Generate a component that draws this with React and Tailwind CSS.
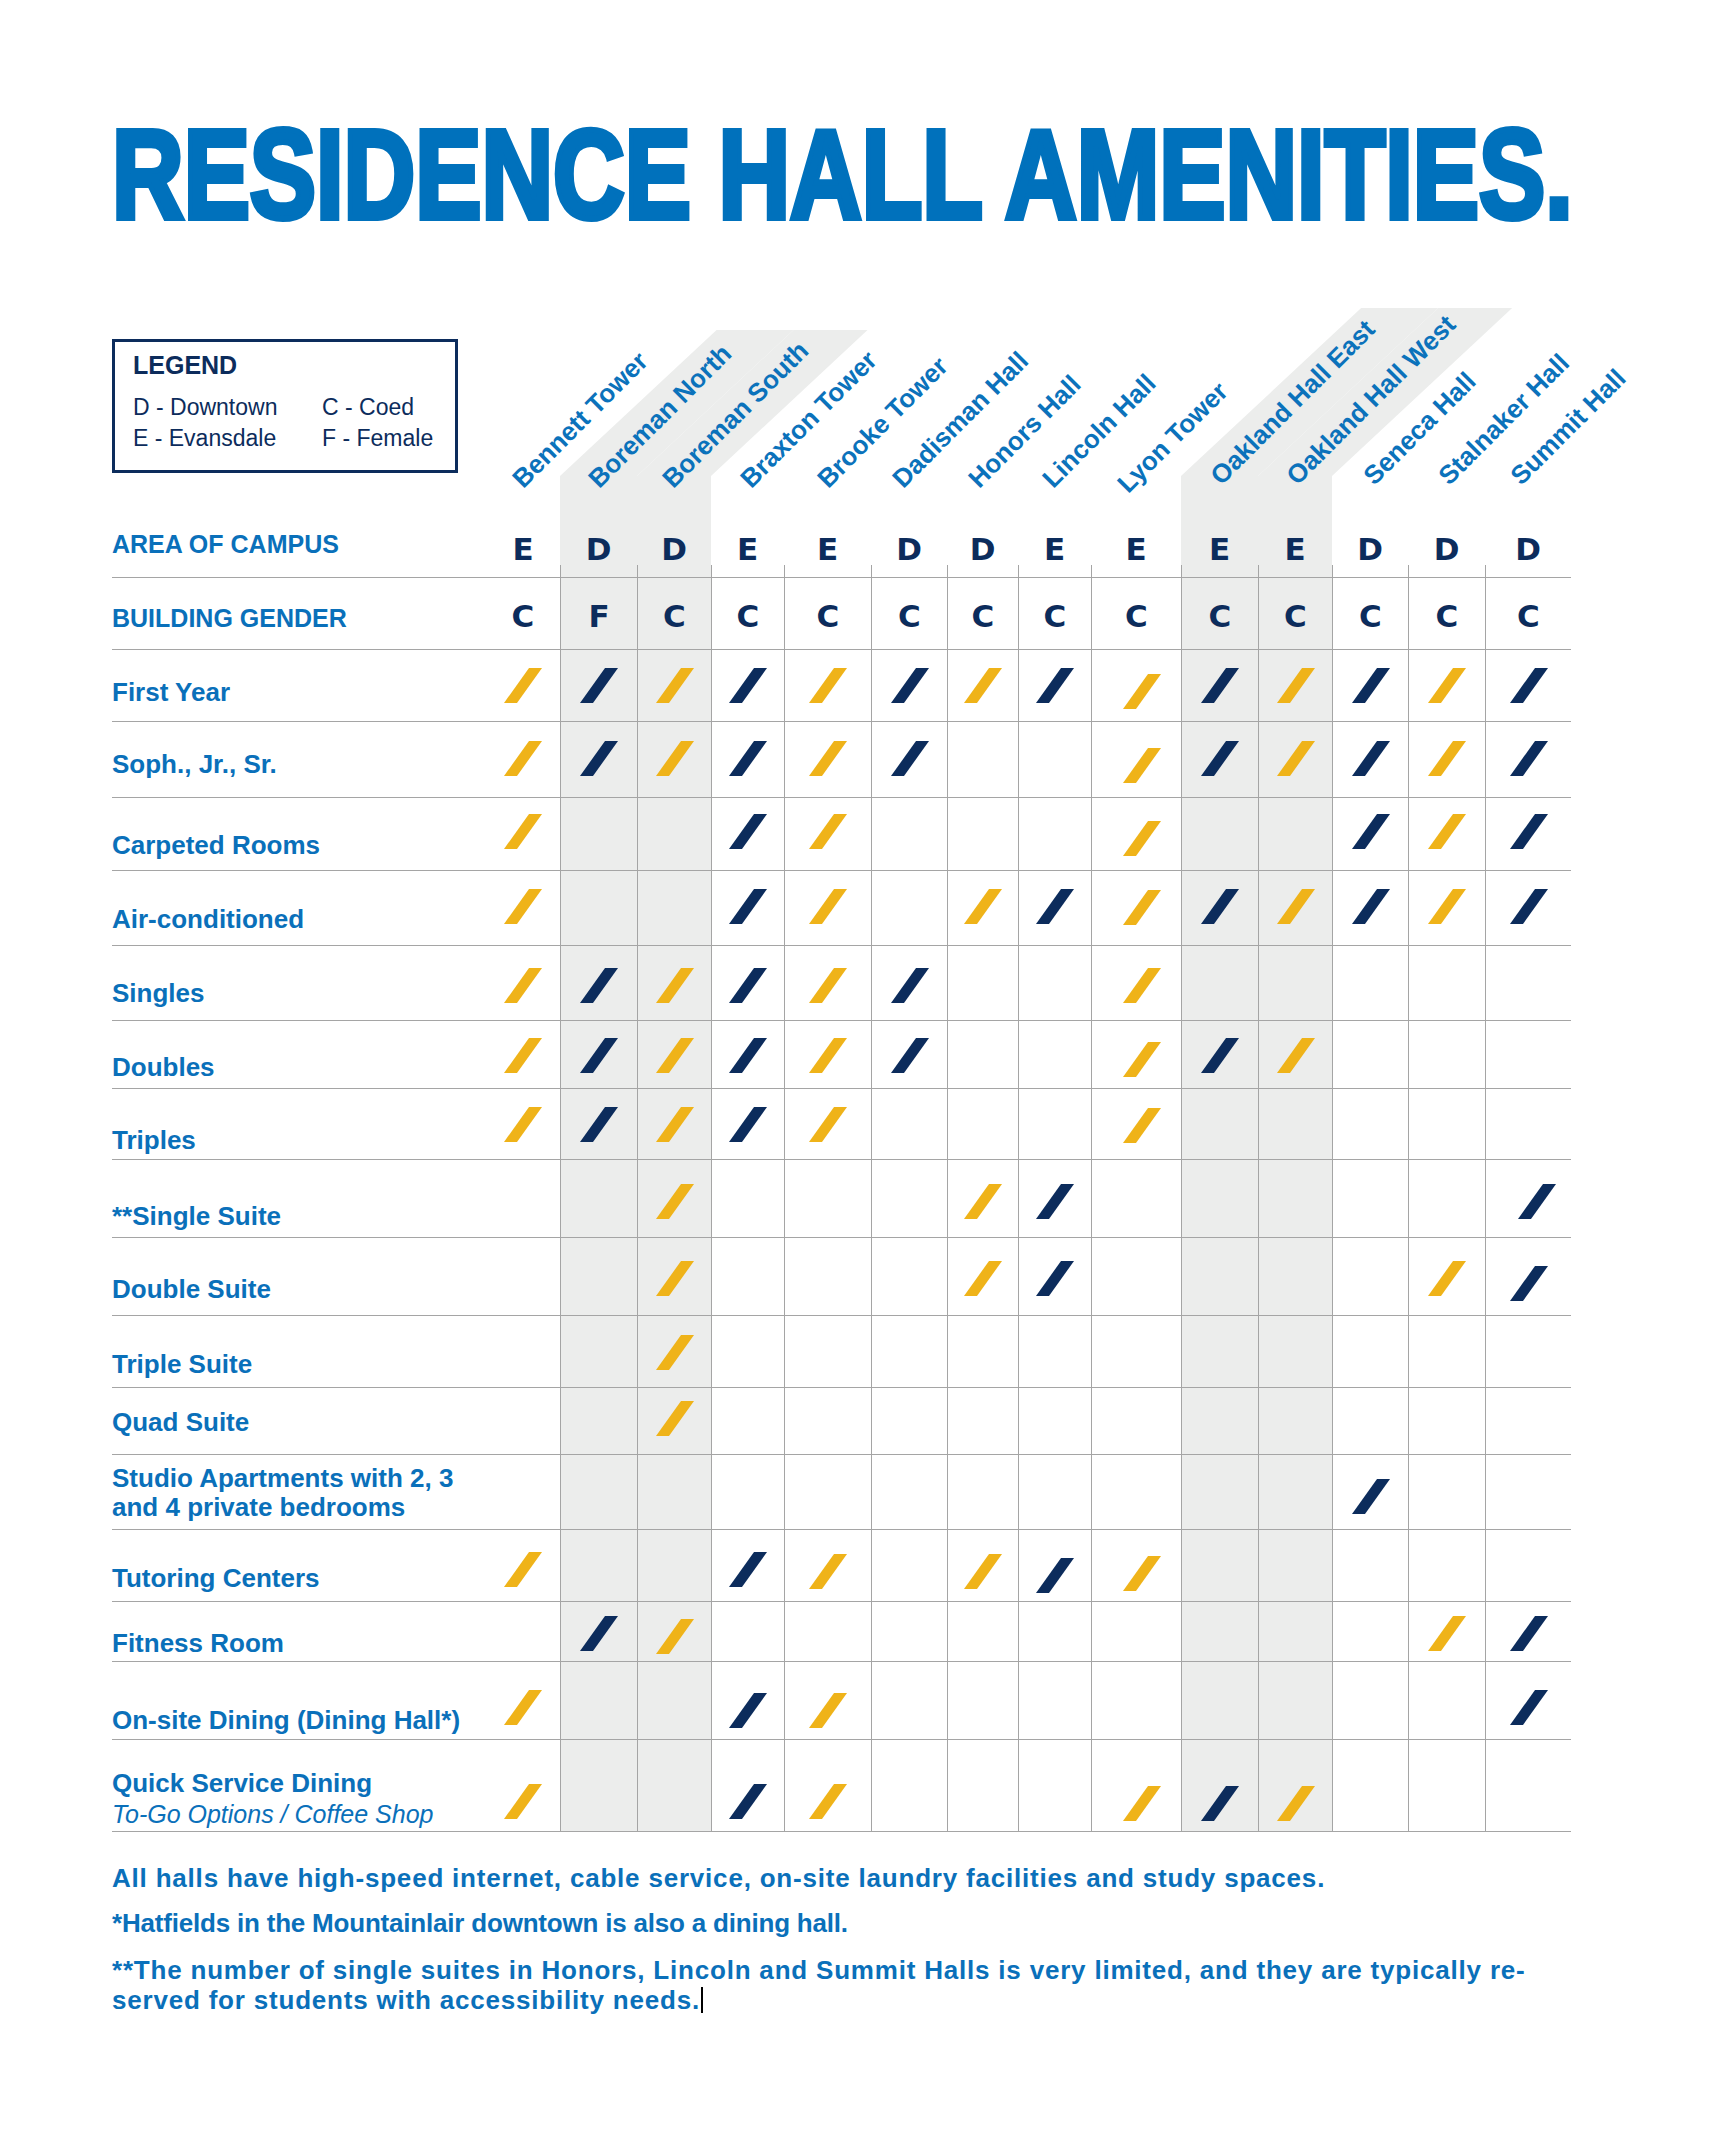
import React from 'react'

const NAVY = '#0c2c5c'
const GOLD = '#efb319'

const GRID = 'grid grid-cols-[374px_74px_77px_74px_73px_87px_76px_71px_73px_90px_77px_74px_76px_77px_86px] w-[1459px]'

// header names, area + gender codes, and where each slanted name starts
const COLS = [
  { name: 'Bennett Tower', area: 'E', gender: 'C', pos: 'left-[40px] bottom-[85px]' },
  { name: 'Boreman North', area: 'D', gender: 'F', pos: 'left-[42px] bottom-[85px]', shade: 'h-[146px]' },
  { name: 'Boreman South', area: 'D', gender: 'C', pos: 'left-[39px] bottom-[85px]', shade: 'h-[146px]' },
  { name: 'Braxton Tower', area: 'E', gender: 'C', pos: 'left-[43px] bottom-[85px]' },
  { name: 'Brooke Tower', area: 'E', gender: 'C', pos: 'left-[47px] bottom-[85px]' },
  { name: 'Dadisman Hall', area: 'D', gender: 'C', pos: 'left-[35px] bottom-[85px]' },
  { name: 'Honors Hall', area: 'D', gender: 'C', pos: 'left-[35px] bottom-[85px]' },
  { name: 'Lincoln Hall', area: 'E', gender: 'C', pos: 'left-[38px] bottom-[85px]' },
  { name: 'Lyon Tower', area: 'E', gender: 'C', pos: 'left-[40px] bottom-[80px]' },
  { name: 'Oakland Hall East', area: 'E', gender: 'C', pos: 'left-[43px] bottom-[88px]', shade: 'h-[168px]' },
  { name: 'Oakland Hall West', area: 'E', gender: 'C', pos: 'left-[42px] bottom-[88px]', shade: 'h-[168px]' },
  { name: 'Seneca Hall', area: 'D', gender: 'C', pos: 'left-[45px] bottom-[88px]' },
  { name: 'Stalnaker Hall', area: 'D', gender: 'C', pos: 'left-[44px] bottom-[88px]' },
  { name: 'Summit Hall', area: 'D', gender: 'C', pos: 'left-[39px] bottom-[88px]' },
]

// off = small nudges for marks that sit off-centre in the print (Lyon Tower mostly)
const ROWS = [
  { label: 'First Year', h: 'h-[72px]', pb: 'pb-[16px]', pt: 'pt-[18px]', off: { 8: 'translate-x-[5px] translate-y-[6px]' }, marks: [0, 1, 2, 3, 4, 5, 6, 7, 8, 9, 10, 11, 12, 13] },
  { label: 'Soph., Jr., Sr.', h: 'h-[76px]', pb: 'pb-[20px]', pt: 'pt-[19px]', off: { 8: 'translate-x-[5px] translate-y-[7px]' }, marks: [0, 1, 2, 3, 4, 5, 8, 9, 10, 11, 12, 13] },
  { label: 'Carpeted Rooms', h: 'h-[73px]', pb: 'pb-[12px]', pt: 'pt-[16px]', off: { 8: 'translate-x-[5px] translate-y-[7px]' }, marks: [0, 3, 4, 8, 11, 12, 13] },
  { label: 'Air-conditioned', h: 'h-[75px]', pb: 'pb-[13px]', pt: 'pt-[18px]', off: { 8: 'translate-x-[5px] translate-y-[1px]' }, marks: [0, 3, 4, 6, 7, 8, 9, 10, 11, 12, 13] },
  { label: 'Singles', h: 'h-[75px]', pb: 'pb-[14px]', pt: 'pt-[22px]', off: { 8: 'translate-x-[5px]' }, marks: [0, 1, 2, 3, 4, 5, 8] },
  { label: 'Doubles', h: 'h-[68px]', pb: 'pb-[8px]', pt: 'pt-[17px]', off: { 8: 'translate-x-[5px] translate-y-[4px]' }, marks: [0, 1, 2, 3, 4, 5, 8, 9, 10] },
  { label: 'Triples', h: 'h-[71px]', pb: 'pb-[6px]', pt: 'pt-[18px]', off: { 8: 'translate-x-[5px] translate-y-[1px]' }, marks: [0, 1, 2, 3, 4, 8] },
  { label: '**Single Suite', h: 'h-[78px]', pb: 'pb-[8px]', pt: 'pt-[24px]', off: { 13: 'translate-x-[8px]' }, marks: [2, 6, 7, 13] },
  { label: 'Double Suite', h: 'h-[78px]', pb: 'pb-[13px]', pt: 'pt-[23px]', off: { 13: 'translate-y-[5px]' }, marks: [2, 6, 7, 12, 13] },
  { label: 'Triple Suite', h: 'h-[72px]', pb: 'pb-[10px]', pt: 'pt-[19px]', off: {}, marks: [2] },
  { label: 'Quad Suite', h: 'h-[67px]', pb: 'pb-[19px]', pt: 'pt-[13px]', off: {}, marks: [2] },
  { label: 'Studio Apartments with 2, 3', label2: 'and 4 private bedrooms', h: 'h-[75px]', pb: 'pb-[7px]', pt: 'pt-[24px]', off: {}, marks: [11] },
  { label: 'Tutoring Centers', h: 'h-[72px]', pb: 'pb-[10px]', pt: 'pt-[22px]', off: { 4: 'translate-y-[2px]', 6: 'translate-y-[2px]', 7: 'translate-y-[6px]', 8: 'translate-x-[5px] translate-y-[4px]' }, marks: [0, 3, 4, 6, 7, 8] },
  { label: 'Fitness Room', h: 'h-[60px]', pb: 'pb-[5px]', pt: 'pt-[14px]', off: { 2: 'translate-y-[3px]' }, marks: [1, 2, 12, 13] },
  { label: 'On-site Dining (Dining Hall*)', h: 'h-[78px]', pb: 'pb-[6px]', pt: 'pt-[28px]', off: { 3: 'translate-y-[3px]', 4: 'translate-y-[3px]' }, marks: [0, 3, 4, 13] },
  { label: 'Quick Service Dining', sub: 'To-Go Options / Coffee Shop', h: 'h-[92px]', pb: 'pb-[4px]', pt: 'pt-[44px]', off: { 8: 'translate-x-[5px] translate-y-[2px]', 9: 'translate-y-[2px]', 10: 'translate-y-[2px]' }, marks: [0, 3, 4, 8, 9, 10] },
]

function Mark({ color }) {
  return (
    <svg width="38" height="35" viewBox="0 0 38 35">
      <polygon points="25,0 38,0 13,35 0,35" fill={color} />
    </svg>
  )
}

function cellClass(i) {
  let c = ''
  if (i > 0) c += ' border-l border-[#a5a5a5]'
  if (COLS[i].shade) c += ' bg-[#ecedec]'
  return c
}

function HeaderRow() {
  return (
    <div className={`${GRID} h-[277px] border-b border-[#a5a5a5]`}>
      <div className="flex flex-col justify-between pt-[38px] pb-[20px]">
        <div className="w-[346px] h-[134px] border-[3px] border-[#0c2c5c] pl-[18px] pt-[11px] text-[#0c2c5c]">
          <div className="text-[25px] leading-[25px] font-bold">LEGEND</div>
          <div className="mt-[14px] grid grid-cols-[189px_auto] text-[23px] leading-[31px]">
            <span>D - Downtown</span>
            <span>C - Coed</span>
            <span>E - Evansdale</span>
            <span>F - Female</span>
          </div>
        </div>
        <div className="text-[25px] leading-[25px] font-bold text-[#0a70ba]">AREA OF CAMPUS</div>
      </div>

      {COLS.map((col, i) => (
        <div key={col.name} className="relative flex flex-col justify-end">
          {col.shade && (
            <>
              <div className="absolute inset-x-0 bottom-0 h-[101px] bg-[#ecedec]" />
              <div className={`absolute inset-x-0 bottom-[101px] ${col.shade} bg-[#ecedec] origin-bottom-left skew-x-[-47deg]`} />
            </>
          )}
          <span className={`absolute z-10 ${col.pos} origin-bottom-left rotate-[-45deg] whitespace-nowrap text-[26px] leading-[26px] font-bold text-[#0b72bb]`}>
            {col.name}
          </span>
          <div className="relative text-center font-['DejaVu_Sans',sans-serif] font-bold text-[31px] leading-[31px] text-[#0c2c5c]">
            {col.area}
          </div>
          <div className={`relative h-[12px] ${i > 0 ? 'border-l border-[#a5a5a5]' : ''}`} />
        </div>
      ))}
    </div>
  )
}

function GenderRow() {
  return (
    <div className={`${GRID} h-[72px] border-b border-[#a5a5a5]`}>
      <div className="flex flex-col justify-end pb-[18px] text-[25px] leading-[25px] font-bold text-[#0a70ba]">
        BUILDING GENDER
      </div>
      {COLS.map((col, i) => (
        <div key={col.name} className={`pt-[23px] text-center font-['DejaVu_Sans',sans-serif] font-bold text-[31px] leading-[31px] text-[#0c2c5c]${cellClass(i)}`}>
          {col.gender}
        </div>
      ))}
    </div>
  )
}

function AmenityRow({ row }) {
  return (
    <div className={`${GRID} ${row.h} border-b border-[#a5a5a5]`}>
      <div className={`flex flex-col justify-end ${row.pb} text-[26px] leading-[26px] font-bold text-[#0a70ba]`}>
        {row.label2 ? (
          <>
            <span className="leading-[29px]">{row.label}</span>
            <span className="leading-[29px]">{row.label2}</span>
          </>
        ) : (
          <span>{row.label}</span>
        )}
        {row.sub && (
          <span className="mt-[5px] text-[25px] leading-[26px] font-normal italic">{row.sub}</span>
        )}
      </div>
      {COLS.map((col, i) => (
        <div key={col.name} className={`flex justify-center ${row.pt}${cellClass(i)}`}>
          {row.marks.includes(i) && (
            <div className={row.off[i] || ''}>
              <Mark color={i % 2 === 0 ? GOLD : NAVY} />
            </div>
          )}
        </div>
      ))}
    </div>
  )
}

export default function App() {
  return (
    <div className="w-[1726px] min-h-[2146px] bg-white pl-[112px] font-['Liberation_Sans',Arial,sans-serif]">
      <div className="overflow-hidden pt-[112px]">
        <h1 className="inline-block whitespace-nowrap origin-left scale-x-[0.7874] text-[126px] leading-[126px] font-bold text-[#0071bc] [-webkit-text-stroke:6px_#0071bc]">
          RESIDENCE HALL AMENITIES.
        </h1>
      </div>

      <div className="mt-[63px]">
        <HeaderRow />
        <GenderRow />
        {ROWS.map(row => (
          <AmenityRow key={row.label} row={row} />
        ))}
      </div>

      {/* notes under the table */}
      <div className="mt-[31px] w-[1540px] text-[26px] leading-[30px] font-bold text-[#0a70ba] tracking-[0.8px]">
        <p>All halls have high-speed internet, cable service, on-site laundry facilities and study spaces.</p>
        <p className="mt-[15px] tracking-[-0.2px]">*Hatfields in the Mountainlair downtown is also a dining hall.</p>
        <p className="mt-[17px]">
          **The number of single suites in Honors, Lincoln and Summit Halls is very limited, and they are typically re-
          <br />
          served for students with accessibility needs.
          <span className="inline-block w-[2px] h-[26px] bg-black align-[-4px] ml-[1px]" />
        </p>
      </div>
    </div>
  )
}
